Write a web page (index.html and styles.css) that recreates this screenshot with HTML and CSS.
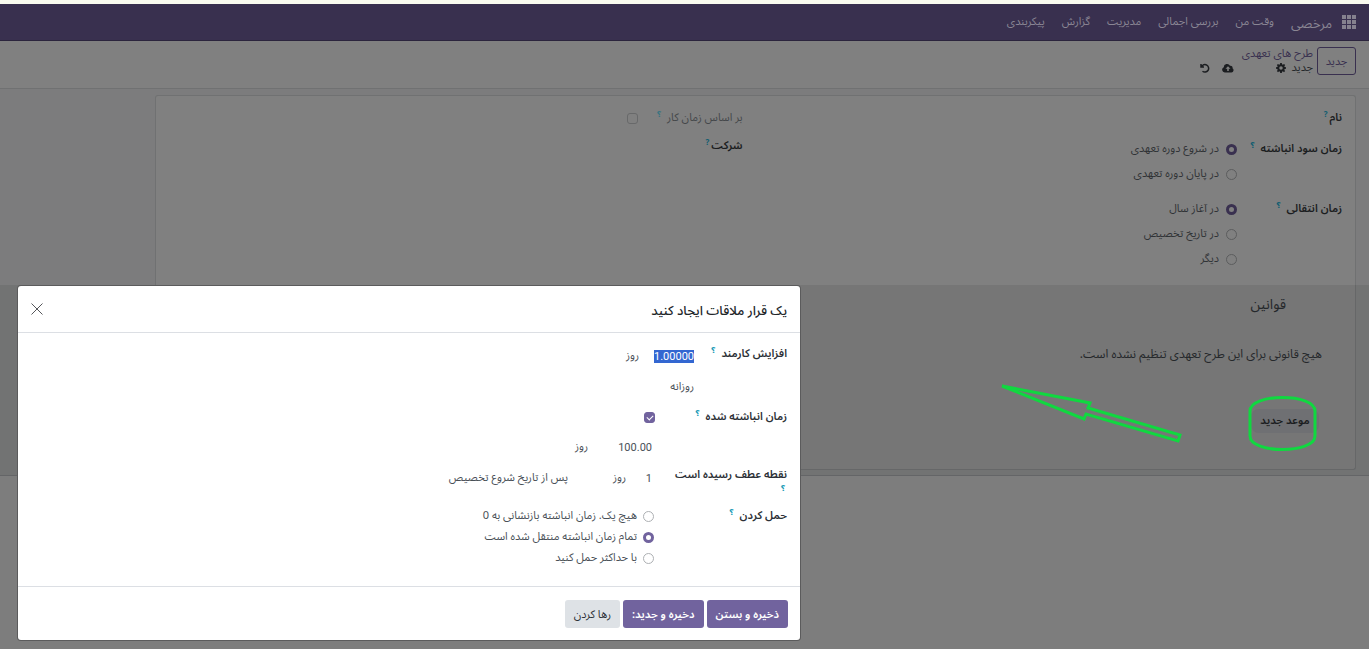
FILE: index.html
```html
<!DOCTYPE html>
<html lang="fa" dir="rtl">
<head>
<meta charset="utf-8">
<title>مرخصی</title>
<link rel="stylesheet" href="styles.css">
</head>
<body>
<header class="navbar">
  <button class="apps" aria-label="برنامه ها"><svg width="14" height="14" viewBox="0 0 14 14"><path d="M0 0h4v4H0zM5 0h4v4H5zM10 0h4v4h-4zM0 5h4v4H0zM5 5h4v4H5zM10 5h4v4h-4zM0 10h4v4H0zM5 10h4v4H5zM10 10h4v4h-4z"/></svg></button>
  <a class="brand" href="#">مرخصی</a>
  <nav class="menu">
    <a href="#">وقت من</a>
    <a href="#">بررسی اجمالی</a>
    <a href="#">مدیریت</a>
    <a href="#">گزارش</a>
    <a href="#">پیکربندی</a>
  </nav>
</header>
<div class="control-panel">
  <button class="btn-new">جدید</button>
  <div class="crumbs">
    <a href="#">طرح های تعهدی</a>
    <div class="crumb-current">
      <span>جدید</span>
      <button class="icon-btn gear" aria-label="تنظیمات"><svg width="10" height="10" viewBox="0 0 16 16"><path fill-rule="evenodd" d="M6.700 0h2.600l.4 2.100 1.300.6L12.800 1.400l1.800 1.800-1.300 1.800.6 1.300 2.100.4v2.600l-2.100.4-.6 1.300 1.300 1.800-1.800 1.800-1.800-1.300-1.300.6-.4 2.100H6.700l-.4-2.100-1.300-.6-1.800 1.300-1.800-1.800 1.300-1.800-.6-1.300L0 9.300V6.700l2.100-.4.6-1.300L1.400 3.200l1.800-1.800 1.800 1.300 1.300-.6zM8 5.200a2.800 2.800 0 1 0 0 5.600 2.800 2.800 0 0 0 0-5.600z"/></svg></button>
    </div>
  </div>
  <div class="status-icons">
    <button class="icon-btn" aria-label="ذخیره"><svg width="12" height="10" viewBox="0 0 24 18"><path fill-rule="evenodd" d="M5.500 18A5.500 5.500 0 0 1 3.500 7.500 6.600 6.600 0 0 1 16 4.600a4 4 0 0 1 5 5A4.600 4.600 0 0 1 19 18zM12 5.500 7 10.500h3.400V15h3.200v-4.500H17z"/></svg></button>
    <button class="icon-btn" aria-label="لغو"><svg width="10" height="10" viewBox="0 0 20 20"><path class="stroke" d="M2 2v6h6M3 7.500A7.500 7.500 0 1 1 5 16.500"/></svg></button>
  </div>
</div>
<main class="content">
  <section class="sheet-band">
    <div class="sheet sheet-top">
      <div class="group">
        <div class="row"><label class="strong" for="plan-name">نام<sup>?</sup></label><input class="plain" id="plan-name"></div>
        <fieldset class="row">
          <legend class="strong">زمان سود انباشته<sup class="far">؟</sup></legend>
          <div class="options">
            <label><input type="radio" name="gain" checked>در شروع دوره تعهدی</label>
            <label><input type="radio" name="gain">در پایان دوره تعهدی</label>
          </div>
        </fieldset>
        <fieldset class="row">
          <legend class="strong">زمان انتقالی<sup class="far">؟</sup></legend>
          <div class="options">
            <label><input type="radio" name="carry" checked>در آغاز سال</label>
            <label><input type="radio" name="carry">در تاریخ تخصیص</label>
            <label><input type="radio" name="carry">دیگر</label>
          </div>
        </fieldset>
      </div>
      <div class="group">
        <div class="row muted"><label for="worked">بر اساس زمان کار<sup class="far">؟</sup></label><input type="checkbox" id="worked" disabled></div>
        <div class="row"><label class="strong" for="company">شرکت<sup>?</sup></label><input class="plain" id="company"></div>
      </div>
    </div>
  </section>
  <section class="sheet-band rules-band">
    <div class="sheet sheet-bottom">
      <h2>قوانین</h2>
      <p>هیچ قانونی برای این طرح تعهدی تنظیم نشده است.</p>
      <button class="btn-milestone">موعد جدید</button>
    </div>
  </section>
</main>

<svg class="marks" width="330" height="80" viewBox="0 0 330 80">
  <path d="M2 6 90 23 88 28 180 55 178 61 86 34 84 39Z"/>
  <path d="M250 31C250 13 315 13 315 31V56C315 74 250 74 250 56Z"/>
</svg>

<form class="modal" role="dialog" aria-labelledby="modal-title">
  <div class="modal-head">
    <h1 id="modal-title">یک قرار ملاقات ایجاد کنید</h1>
    <button type="button" class="close" aria-label="بستن"><svg width="12" height="12" viewBox="0 0 12 12"><path d="M.5.5l11 11M11.500.5l-11 11"/></svg></button>
  </div>
  <div class="modal-body">
    <div class="field gain">
      <label class="strong" for="gain-value">افزایش کارمند<sup class="far">؟</sup></label>
      <div class="value"><input class="amount" id="gain-value" value="1.00000"><span>روز</span></div>
    </div>
    <div class="field frequency"><span></span><select aria-label="دوره"><option>روزانه</option></select></div>
    <div class="field check">
      <label class="strong" for="cap">زمان انباشته شده<sup class="far">؟</sup></label>
      <div class="value"><input type="checkbox" id="cap" checked></div>
    </div>
    <div class="field cap-value"><span></span><div class="value"><input class="cap" aria-label="سقف" value="100.00"><span>روز</span></div></div>
    <div class="field start">
      <label class="strong" for="start">نقطه عطف رسیده است <sup>؟</sup></label>
      <div class="value"><input class="count" id="start" value="1"><span class="unit">روز</span><span>پس از تاریخ شروع تخصیص</span></div>
    </div>
    <fieldset class="field over">
      <legend class="strong">حمل کردن<sup class="far">؟</sup></legend>
      <div class="options">
        <label><input type="radio" name="over">هیچ یک. زمان انباشته بازنشانی به 0</label>
        <label><input type="radio" name="over" checked>تمام زمان انباشته منتقل شده است</label>
        <label><input type="radio" name="over">با حداکثر حمل کنید</label>
      </div>
    </fieldset>
  </div>
  <div class="modal-foot">
    <button type="button" class="btn primary">ذخیره و بستن</button>
    <button type="button" class="btn primary">دخیره و جدید:</button>
    <button type="button" class="btn">رها کردن</button>
  </div>
</form>
<script src="app.js"></script>
</body>
</html>
```
FILE: styles.css
```css
:root {
  --accent: #71639e;
  --accent-dim: #39304f;
  --teal: #1799b5;
  --teal-dim: #0f5d70;
}
* { box-sizing: border-box; }
body {
  margin: 0;
  min-height: 100vh;
  border-top: 4px solid #fafbf0;
  background: #7d7d7d;
  color: #25282b;
  font: 11px/16px "Noto Sans Arabic", "DejaVu Sans Condensed", "DejaVu Sans", sans-serif;
}
button, input, select { font: inherit; color: inherit; }
button { cursor: pointer; padding: 0; border: 0; background: none; }
a { color: inherit; text-decoration: none; }
fieldset { margin: 0; padding: 0; border: 0; min-width: 0; }
legend { float: right; padding: 0; }
.strong { font-weight: 600; color: #1b1d20; }
sup { margin-right: 2px; color: var(--teal-dim); font-size: 8px; font-weight: 700; line-height: 8px; vertical-align: 4px; }
sup.far { margin-right: 6px; }

.navbar {
  display: flex;
  align-items: center;
  height: 37px;
  padding: 0 13px;
  background: #39304f;
  border-bottom: 1px solid #2b243d;
  color: #8a8694;
}
.apps { display: flex; fill: #85818e; }
.brand { margin-right: 10px; padding-top: 4px; font-size: 13px; }
.menu { display: flex; gap: 17px; margin-right: 17px; }

.control-panel {
  display: flex;
  height: 48px;
  padding: 6px 13px;
  background: #808080;
  border-bottom: 1px solid #707172;
}
.btn-new { width: 39px; height: 28px; padding-top: 2px; border: 1px solid #39304f; border-radius: 3px; color: #39304f; }
.crumbs { margin-right: 4px; line-height: 14px; }
.crumbs a { display: block; color: #39304f; }
.crumb-current { display: flex; align-items: center; gap: 6px; }
.icon-btn { display: flex; fill: #1b1d20; }
.stroke { fill: none; stroke: #1b1d20; stroke-width: 3; }
.status-icons { display: flex; align-items: center; gap: 12px; height: 14px; margin: 14px 8px 0 0; }

.content { border-bottom: 1px solid #646567; }
.sheet-band { padding: 6px 13px 0 155px; background: #7c7c7d; }
.rules-band { padding-top: 0; padding-bottom: 5px; background: #727373; }
.sheet { border: 1px solid #707172; }
.sheet-top {
  display: grid;
  grid-template-columns: 1fr 1fr;
  column-gap: 26px;
  min-height: 190px;
  padding: 14px 13px;
  background: #808080;
  border-bottom: 0;
  border-radius: 3px 3px 0 0;
}
.group { display: flex; flex-direction: column; gap: 12px; }
.row { display: grid; grid-template-columns: 105px 1fr; align-items: start; }
.row + fieldset.row { margin-top: 3px; }
fieldset.row + fieldset.row { margin-top: 7px; }
.row label, .row legend { white-space: nowrap; }
.muted { color: #45484b; }
.muted sup { color: #397480; }
.plain { width: 100%; height: 16px; padding: 0; border: 0; background: none; }
.options { display: flex; flex-direction: column; gap: 9px; }
.options label { display: flex; align-items: center; gap: 7px; color: #303336; }
input[type="radio"], input[type="checkbox"] {
  appearance: none;
  flex: none;
  width: 11px;
  height: 11px;
  margin: 0;
  border: 1px solid #5c5d5e;
  border-radius: 50%;
}
input[type="radio"]:checked { border: 3px solid var(--accent-dim); background: #808080; }
input[type="checkbox"] { border-radius: 3px; }
.muted input[type="checkbox"] { margin-top: 3px; border-color: #68696a; }

.sheet-bottom {
  min-height: 185px;
  padding: 10px 33px;
  background: #767676;
  border-color: #666768;
  border-top: 0;
  border-radius: 0 0 3px 3px;
}
.sheet-bottom h2 { margin: 0 36px 0 0; font-size: 14px; font-weight: 400; line-height: 20px; }
.sheet-bottom p { margin: 32px 0 46px; font-size: 12px; }
.btn-milestone { width: 68px; height: 24px; margin-right: 3px; border-radius: 8px; background: #6f7073; font-weight: 600; color: #1b1d20; }

.marks { position: absolute; top: 380px; left: 1000px; fill: none; stroke: #10d840; stroke-width: 3; }

.modal {
  position: absolute;
  top: 286px;
  left: 18px;
  width: 782px;
  background: #fff;
  border-radius: 3px;
  box-shadow: 0 0 0 1px #5b5b5c;
  color: #495057;
}
.modal-head {
  display: flex;
  align-items: center;
  justify-content: space-between;
  height: 47px;
  padding: 0 13px;
  border-bottom: 1px solid #dcdfe4;
}
.modal-head h1 { margin: 0; padding-top: 3px; font-size: 13px; font-weight: 500; color: #212529; }
.close { display: flex; fill: none; stroke: #55565a; stroke-width: 1; }
.modal .strong { color: #2c3036; }
.modal sup { color: var(--teal); }
.modal-body { padding: 13px 13px 20px; }
.field { display: grid; grid-template-columns: 115px 1fr; align-items: start; }
.value { display: flex; align-items: center; }
.modal input:not([type]), .modal select {
  height: 20px;
  padding: 0 3px;
  border: 0;
  background: none;
  appearance: none;
  outline: 0;
  font-family: Roboto, "Noto Sans Arabic", "DejaVu Sans Condensed", sans-serif;
}
.modal select { justify-self: start; }
.gain, .frequency { grid-template-columns: 90px 1fr; }
.gain { height: 31px; }
.frequency { height: 32px; }
.modal .amount { width: 51px; border-bottom: 1px solid var(--accent); margin-left: 7px; }
.amount::selection { background: #3367d1; color: #fff; }
.check, .cap-value { grid-template-columns: 132px 1fr; }
.check { height: 28px; }
.check .value { height: 16px; }
.cap-value { height: 31px; }
.modal .cap { width: 61px; margin-left: 6px; }
.start { height: 40px; grid-template-columns: 132px 1fr; }
.start label { width: 115px; line-height: 14px; }
.start sup { display: block; line-height: 14px; }
.modal .count { width: 23px; margin-left: 6px; }
.unit { width: 58px; }
.over { grid-template-columns: 133px 1fr; }
.over .options { gap: 5px; }
.modal .options label { gap: 6px; color: #495057; }
.modal input[type="radio"] { border-color: #adb0b3; }
.modal input[type="radio"]:checked { border-color: var(--accent); background: #fff; }
.modal input[type="checkbox"]:checked {
  border-color: var(--accent);
  background: var(--accent);
  display: grid;
  place-items: center;
}
.modal input[type="checkbox"]:checked::after {
  content: "";
  width: 5px;
  height: 3px;
  border: solid #fff;
  border-width: 0 0 1px 1px;
  transform: rotate(-45deg);
}
.modal-foot { display: flex; gap: 3px; padding: 13px 12px 12px; border-top: 1px solid #dcdfe4; }
.btn { height: 28px; padding: 2px 9px 0; border-radius: 3px; background: #dee2e6; color: #2c3036; }
.btn.primary { background: var(--accent); color: #fff; font-weight: 600; }
```
FILE: app.js
```js
const gainInput = document.getElementById('gain-value');
gainInput.focus();
gainInput.select();
```
